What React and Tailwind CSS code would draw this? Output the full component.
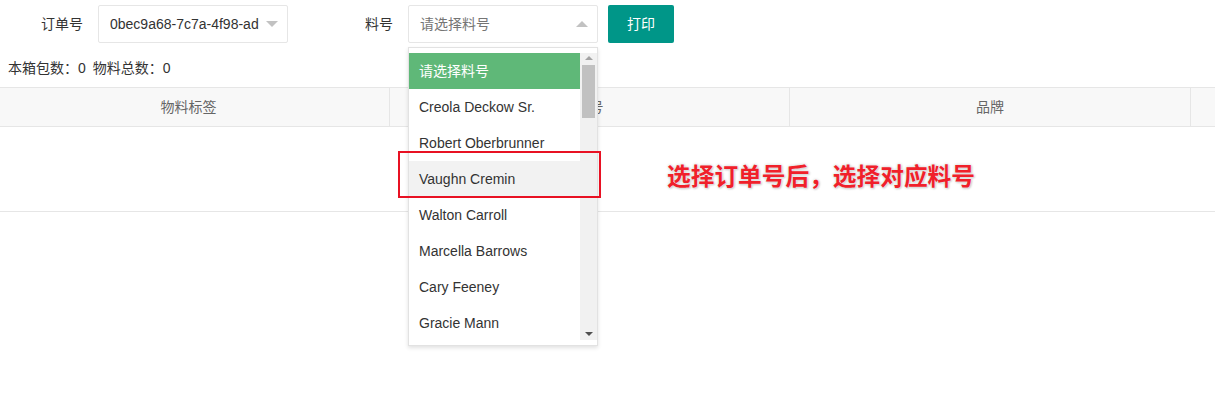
const parts = [
    'Creola Deckow Sr.',
    'Robert Oberbrunner',
    'Vaughn Cremin',
    'Walton Carroll',
    'Marcella Barrows',
    'Cary Feeney',
    'Gracie Mann',
];

const Caret = ({ up }) => (
    <span
        className={
            up
                ? 'w-0 h-0 border-x-[6px] border-x-transparent border-b-[6px] border-b-[#c2c2c2]'
                : 'w-0 h-0 border-x-[6px] border-x-transparent border-t-[6px] border-t-[#c2c2c2]'
        }
    />
);

const App = () => {
    return (
        <div className="relative w-[1215px] h-[404px] overflow-hidden bg-white text-[14px] text-[#333] font-['Liberation_Sans','Noto_Sans_CJK_SC',sans-serif]">
            {/* filter row */}
            <div className="flex items-center pt-[5px]">
                <label className="w-[98px] pr-[15px] text-right text-[#333]">订单号</label>
                <div className="w-[190px] h-[38px] border border-[#e6e6e6] rounded-[2px] flex items-center justify-between pl-[11px] pr-[9px]">
                    <span className="text-[#333] whitespace-nowrap overflow-hidden">0bec9a68-7c7a-4f98-ad</span>
                    <Caret />
                </div>
                <label className="w-[120px] pr-[15px] text-right text-[#333]">料号</label>
                <div className="w-[190px] h-[38px] border border-[#e6e6e6] rounded-[2px] flex items-center justify-between pl-[11px] pr-[9px]">
                    <span className="text-[#757575]">请选择料号</span>
                    <Caret up />
                </div>
                <button className="ml-[10px] w-[66px] h-[38px] bg-[#009688] text-white rounded-[2px]">打印</button>
            </div>

            <div className="mt-[15px] mb-[9px] pl-2 h-[20px] leading-[20px] text-[#333] whitespace-nowrap">
                本箱包数：0<span className="ml-[7px]">物料总数：0</span>
            </div>

            {/* table */}
            <div className="w-[1240px]">
                <div className="grid grid-cols-[390px_400px_401px_1fr] h-[40px] bg-[#f8f8f8] border-y border-[#e6e6e6] text-[#666]">
                    <div className="flex items-center justify-center pr-[12px] border-r border-[#e6e6e6]">物料标签</div>
                    <div className="flex items-center justify-center border-r border-[#e6e6e6]">料号</div>
                    <div className="flex items-center justify-center border-r border-[#e6e6e6]">品牌</div>
                    <div />
                </div>
                <div className="h-[85px] border-b border-[#e6e6e6]" />
            </div>

            {/* dropdown */}
            <div className="absolute left-[408px] top-[47px] w-[190px] h-[299px] bg-white border border-[#e2e2e2] shadow-[0_2px_4px_rgba(0,0,0,0.12)] py-[5px] flex">
                <div className="flex-1 overflow-hidden">
                    <div className="h-[36px] leading-[36px] px-[10px] bg-[#5fb878] text-white">请选择料号</div>
                    {parts.map((p) => (
                        <div
                            key={p}
                            className={
                                p === 'Vaughn Cremin'
                                    ? 'h-[36px] leading-[36px] px-[10px] bg-[#f2f2f2] text-[#333] whitespace-nowrap'
                                    : 'h-[36px] leading-[36px] px-[10px] text-[#333] whitespace-nowrap'
                            }
                        >
                            {p}
                        </div>
                    ))}
                </div>
                <div className="w-[17px] bg-[#f1f1f1] flex flex-col items-center">
                    <span className="mt-[3px] w-0 h-0 border-x-[4px] border-x-transparent border-b-[4px] border-b-[#a3a3a3]" />
                    <div className="mt-[5px] w-[13px] h-[53px] bg-[#c1c1c1]" />
                    <div className="flex-1" />
                    <span className="mb-[4px] w-0 h-0 border-x-[4px] border-x-transparent border-t-[4px] border-t-[#505050]" />
                </div>
            </div>

            {/* annotation */}
            <div className="absolute left-[398px] top-[151px] w-[203px] h-[47px] border-2 border-[#e81123]" />
            <div className="absolute left-[667px] top-[161px] text-[23.7px] leading-[32px] font-bold text-[#f0202a] [text-shadow:0_0_2px_#fff,0_0_3px_#bbb,1px_1px_2px_#ccc] whitespace-nowrap">
                选择订单号后，选择对应料号
            </div>
        </div>
    );
};

export default App;
